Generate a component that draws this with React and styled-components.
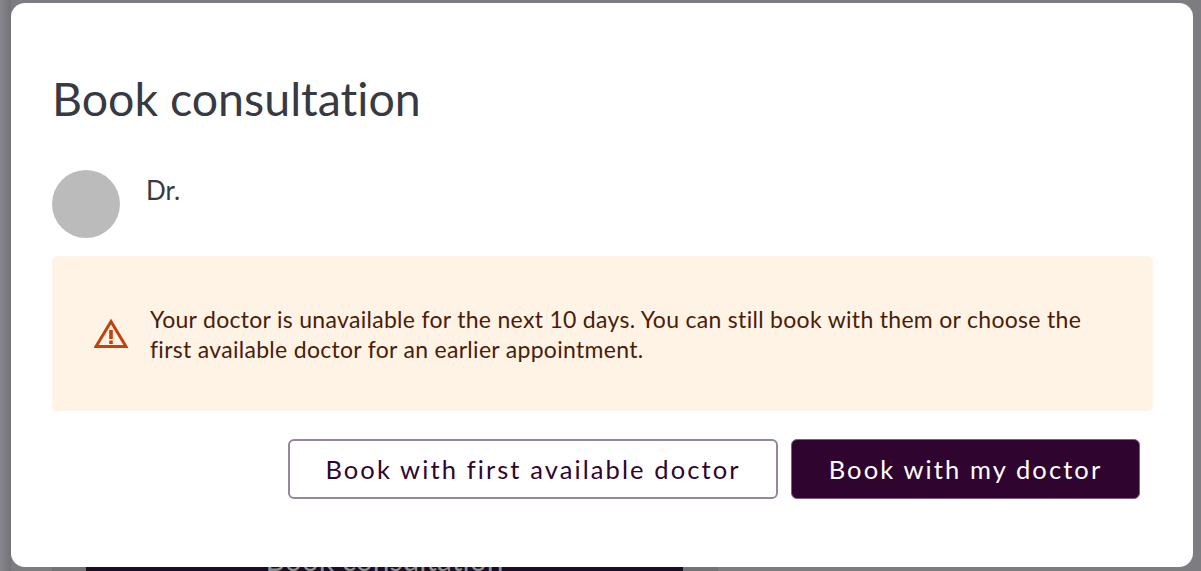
import React from "react";
import styled, { createGlobalStyle } from "styled-components";

const Global = createGlobalStyle`
  html, body { margin: 0; padding: 0; height: 100%; }
  body {
    font-family: "Lato", "Liberation Sans", sans-serif;
    font-variant-ligatures: none;
    background: #7d7d81;
    overflow: hidden;
  }
`;

const Page = styled.div`
  position: relative;
  width: 1201px;
  height: 571px;
  overflow: hidden;
  background: linear-gradient(90deg, #88888c 0, #737377 11px, #7d7d81 11px);
`;

const BehindCard = styled.div`
  position: absolute;
  left: 52px;
  top: 500px;
  width: 666px;
  height: 100px;
  border: 1px solid #6f6f72;
  box-sizing: border-box;
  background: #737376;
`;

const BehindButton = styled.div`
  position: absolute;
  left: 86px;
  top: 520px;
  width: 597px;
  height: 60px;
  box-sizing: border-box;
  background: #1c0c24;
  color: #8f8f92;
  font-size: 30px;
  line-height: 36px;
  text-align: center;
  padding-top: 21px;
`;

const Modal = styled.div`
  position: absolute;
  left: 11px;
  top: 3px;
  width: 1182px;
  height: 564px;
  background: #fff;
  border-radius: 14px;
  padding: 66px 40px 0 41px;
  box-sizing: border-box;
  display: flex;
  flex-direction: column;
`;

const Title = styled.h1`
  margin: 0;
  font-size: 46.5px;
  line-height: 58px;
  font-weight: 400;
  color: #383a42;
`;

const DoctorRow = styled.div`
  display: flex;
  gap: 26px;
  margin-top: 43px;
`;

const Avatar = styled.div`
  width: 68px;
  height: 68px;
  border-radius: 50%;
  background: #bbb;
`;

const DoctorName = styled.div`
  font-size: 26px;
  line-height: 30px;
  margin-top: 5px;
  color: #383a42;
`;

const Notice = styled.div`
  display: flex;
  align-items: center;
  gap: 22px;
  height: 155px;
  margin-top: 18px;
  padding: 0 42px;
  background: #fff3e6;
  border-radius: 6px;
  box-sizing: border-box;
`;

const NoticeText = styled.p`
  margin: 0;
  width: 960px;
  font-size: 23px;
  letter-spacing: 0.3px;
  line-height: 30px;
  color: #4a1c08;
`;

const Actions = styled.div`
  display: flex;
  justify-content: flex-end;
  gap: 13px;
  margin-top: 28px;
  padding-right: 13px;
`;

const Button = styled.button`
  height: 60px;
  width: ${(p) => p.$width}px;
  border: ${(p) => (p.$primary ? "1px solid #7f5f80" : "2px solid #9a8499")};
  border-radius: 6px;
  background: ${(p) => (p.$primary ? "#2f0530" : "#fff")};
  color: ${(p) => (p.$primary ? "#fff" : "#2f0530")};
  font-family: inherit;
  font-size: 25.5px;
  letter-spacing: 2.1px;
  padding: 0;
`;

const WarningIcon = () => (
  <svg width="34" height="30" viewBox="0 0 34 30" fill="none">
    <path d="M17 2.5 L32 27.5 H2 Z" stroke="#c2410c" strokeWidth="3" strokeLinejoin="miter" />
    <path d="M17 11 V20" stroke="#c2410c" strokeWidth="3.6" />
    <path d="M17 21.5 V25" stroke="#c2410c" strokeWidth="3.6" />
  </svg>
);

export default function App() {
  return (
    <Page>
      <Global />
      <BehindCard />
      <BehindButton>Book consultation</BehindButton>
      <Modal>
        <Title>Book consultation</Title>
        <DoctorRow>
          <Avatar />
          <DoctorName>Dr.</DoctorName>
        </DoctorRow>
        <Notice>
          <WarningIcon />
          <NoticeText>
            Your doctor is unavailable for the next 10 days. You can still book with them or choose the first available doctor for an earlier appointment.
          </NoticeText>
        </Notice>
        <Actions>
          <Button $width={490}>Book with first available doctor</Button>
          <Button $primary $width={349}>Book with my doctor</Button>
        </Actions>
      </Modal>
    </Page>
  );
}
